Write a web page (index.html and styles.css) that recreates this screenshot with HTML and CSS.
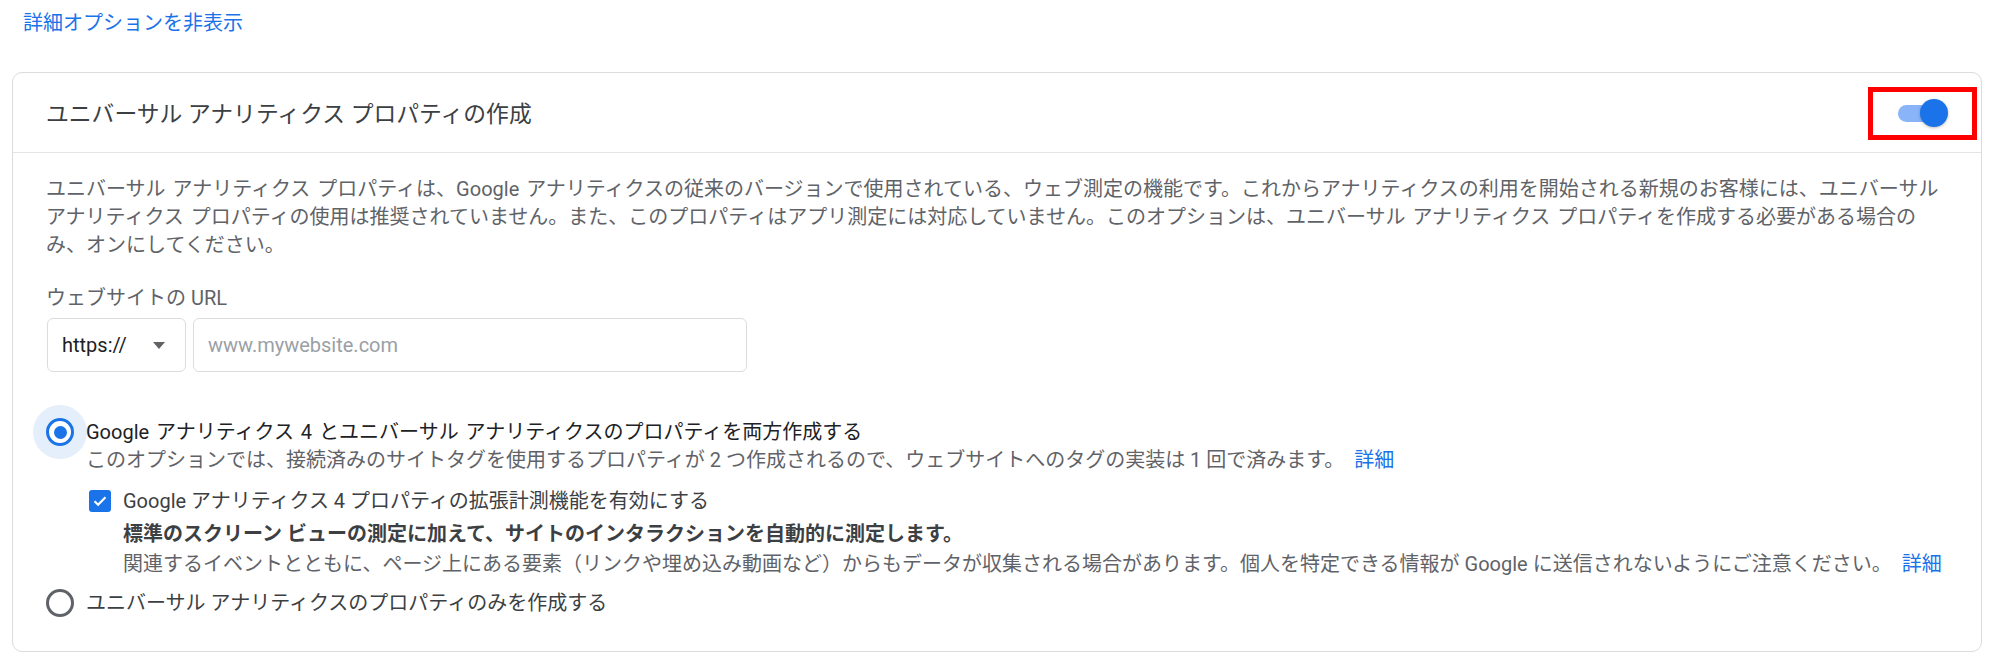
FILE: index.html
```html
<!DOCTYPE html>
<html lang="ja">
<head>
  <meta charset="UTF-8">
  <meta name="viewport" content="width=device-width, initial-scale=1.0">
  <title>ユニバーサル アナリティクス プロパティの作成</title>
  <link rel="stylesheet" href="styles.css">
</head>
<body>

  <a class="more-link" href="#">詳細オプションを非表示</a>

  <section class="card">
    <div class="card-header">
      <h2>ユニバーサル アナリティクス プロパティの作成</h2>
      <span class="switch"><span class="track"></span><span class="knob"></span></span>
    </div>

    <div class="card-body">
      <p class="desc">ユニバーサル アナリティクス プロパティは、Google アナリティクスの従来のバージョンで使用されている、ウェブ測定の機能です。これからアナリティクスの利用を開始される新規のお客様には、ユニバーサル アナリティクス プロパティの使用は推奨されていません。また、このプロパティはアプリ測定には対応していません。このオプションは、ユニバーサル アナリティクス プロパティを作成する必要がある場合の<br>み、オンにしてください。</p>

      <div class="field-label">ウェブサイトの URL</div>
      <div class="url-row">
        <div class="proto">https://
          <svg width="12" height="7" viewBox="0 0 12 7"><path d="M0 0h12L6 7z" fill="#5f6368"/></svg>
        </div>
        <input class="url-input" type="text" placeholder="www.mywebsite.com">
      </div>

      <!-- オプション 1（選択中） -->
      <div class="option">
        <span class="radio checked"></span>
        <div class="option-text">
          <div class="option-title">Google アナリティクス 4 とユニバーサル アナリティクスのプロパティを両方作成する</div>
          <div class="option-sub">このオプションでは、接続済みのサイトタグを使用するプロパティが 2 つ作成されるので、ウェブサイトへのタグの実装は 1 回で済みます。<a href="#">詳細</a></div>

          <div class="check-row">
            <span class="checkbox">
              <svg width="16" height="16" viewBox="0 0 16 16"><path d="M2.5 8.2l3.6 3.6 7.4-7.6" fill="none" stroke="#fff" stroke-width="2.2"/></svg>
            </span>
            <div>
              <div class="check-label">Google アナリティクス 4 プロパティの拡張計測機能を有効にする</div>
              <div class="check-strong">標準のスクリーン ビューの測定に加えて、サイトのインタラクションを自動的に測定します。</div>
              <div class="check-note">関連するイベントとともに、ページ上にある要素（リンクや埋め込み動画など）からもデータが収集される場合があります。個人を特定できる情報が Google に送信されないようにご注意ください。<a href="#">詳細</a></div>
            </div>
          </div>
        </div>
      </div>

      <!-- オプション 2 -->
      <div class="option second">
        <span class="radio"></span>
        <div class="option-text">
          <div class="option-label">ユニバーサル アナリティクスのプロパティのみを作成する</div>
        </div>
      </div>
    </div>
  </section>

</body>
</html>
```

FILE: styles.css
```css
body { margin: 0; font-family: Roboto, "Noto Sans CJK JP", sans-serif; font-size: 20px; color: #3c4043; background: #fff; }
a { color: #1a73e8; text-decoration: none; }

.more-link { display: inline-block; margin: 10px 0 0 23px; font-size: 20px; line-height: 26px; }

.card { margin: 36px 18px 18px 12px; border: 1px solid #dadce0; border-radius: 10px; }
.card-header { height: 79px; display: flex; align-items: center; justify-content: space-between; padding: 0 33px; border-bottom: 1px solid #e3e5e8; }
.card-header h2 { margin: 0; font-size: 22.8px; font-weight: 400; color: #3c4043; }

/* スイッチ（オン） */
.switch { position: relative; width: 50px; height: 28px; }
.switch .track { position: absolute; left: 0; top: 6px; width: 46px; height: 17px; border-radius: 9px; background: #8ab4f8; }
.switch .knob { position: absolute; right: 0; top: 0; width: 28px; height: 28px; border-radius: 50%; background: #1a73e8; box-shadow: 0 1px 3px rgba(0,0,0,.25); }
.switch::after { content: ""; position: absolute; inset: -12px -29px -13px -30px; border: 5px solid #f00; }

.card-body { padding: 22px 29px 34px 33px; }
.desc { margin: 0; line-height: 28px; color: #5f6368; word-spacing: 2px; }

.field-label { margin-top: 27px; line-height: 25px; color: #5f6368; }
.url-row { display: flex; gap: 7px; margin-top: 7px; margin-left: 1px; }
.proto { box-sizing: border-box; width: 139px; height: 54px; display: flex; align-items: center; justify-content: space-between; padding: 0 20px 0 14px; border: 1px solid #dadce0; border-radius: 6px; color: #202124; }
.url-input { box-sizing: border-box; width: 554px; height: 54px; padding: 0 14px; border: 1px solid #dadce0; border-radius: 6px; font: inherit; color: #202124; outline: none; }
.url-input::placeholder { color: #9aa0a6; }

.option { display: flex; align-items: flex-start; gap: 12px; margin-top: 46px; line-height: 28px; }
.option.second { margin-top: 11px; }
.radio { box-sizing: border-box; flex: none; width: 28px; height: 28px; display: grid; place-items: center; border: 3px solid #5f6368; border-radius: 50%; }
.radio.checked { border-color: #1a73e8; box-shadow: 0 0 0 13px #e5eefb; }
.radio.checked::after { content: ""; width: 13px; height: 13px; border-radius: 50%; background: #1a73e8; }

.option-title { color: #202124; word-spacing: 2px; }
.option-sub { color: #5f6368; }
.option-sub a, .check-note a { margin-left: 10px; }
.option-label { color: #3c4043; }

.check-row { display: flex; align-items: flex-start; gap: 12px; margin-top: 13px; margin-left: 3px; }
.checkbox { flex: none; width: 22px; height: 22px; margin-top: 3px; display: grid; place-items: center; border-radius: 3px; background: #1a73e8; }
.check-label { color: #3c4043; }
.check-strong { margin-top: 5px; font-weight: 700; color: #3c4043; }
.check-note { margin-top: 2px; color: #5f6368; }
```
